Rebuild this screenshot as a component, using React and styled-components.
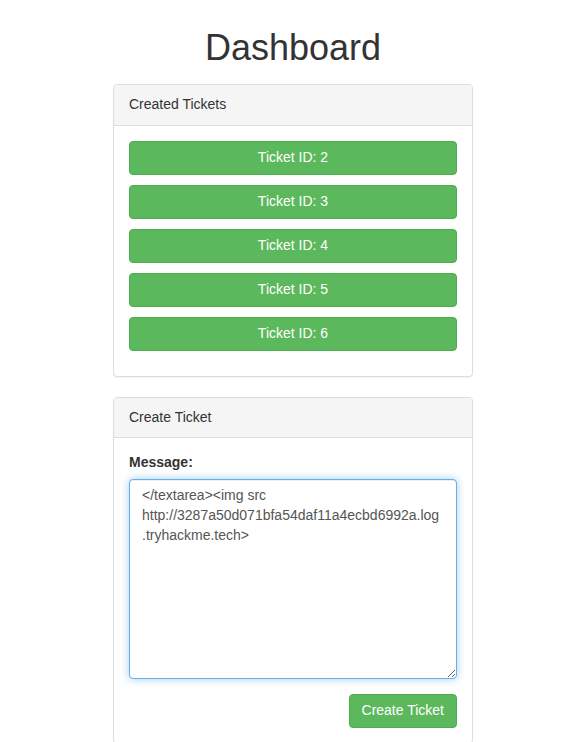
import React from 'react';
import styled, { createGlobalStyle } from 'styled-components';

const GlobalStyle = createGlobalStyle`
  * { box-sizing: border-box; }
  body {
    margin: 0;
    background: #fff;
    color: #333;
    font-family: "Liberation Sans", Arial, sans-serif;
    font-size: 14px;
    line-height: 1.42857;
  }
`;

const Container = styled.div`
  width: 360px;
  margin-left: calc(50% - 181px);
`;

const Title = styled.h1`
  margin: 28px 0 16px;
  font-size: 36px;
  font-weight: 500;
  line-height: 1.1;
  text-align: center;
  color: #333;
`;

const Panel = styled.div`
  background: #fff;
  border: 1px solid #ddd;
  border-radius: 4px;
  box-shadow: 0 1px 1px rgba(0, 0, 0, 0.05);
  margin-bottom: 20px;
`;

const PanelHeading = styled.div`
  padding: 10px 15px;
  background: #f5f5f5;
  border-bottom: 1px solid #ddd;
  border-radius: 3px 3px 0 0;
  color: #333;
`;

const PanelBody = styled.div`
  padding: 15px;
`;

const Button = styled.button`
  display: ${(p) => (p.$block ? 'block' : 'inline-block')};
  width: ${(p) => (p.$block ? '100%' : 'auto')};
  margin-bottom: ${(p) => (p.$block ? '10px' : '0')};
  padding: 6px 12px;
  font-family: inherit;
  font-size: 14px;
  line-height: 1.42857;
  color: #fff;
  background: #5cb85c;
  border: 1px solid #4cae4c;
  border-radius: 4px;
  text-align: center;
  cursor: pointer;
`;

const FormGroup = styled.div`
  margin-bottom: 15px;
`;

const Label = styled.label`
  display: block;
  margin-bottom: 6px;
  font-weight: bold;
`;

const TextArea = styled.textarea`
  display: block;
  width: 100%;
  height: 200px;
  padding: 6px 15px 6px 12px;
  font-family: inherit;
  font-size: 14px;
  line-height: 1.42857;
  color: #555;
  background: #fff;
  border: 1px solid #66afe9;
  border-radius: 4px;
  outline: 0;
  box-shadow: inset 0 1px 1px rgba(0, 0, 0, 0.075), 0 0 8px rgba(102, 175, 233, 0.6);
  word-break: normal;
  overflow-wrap: break-word;
`;

const Actions = styled.div`
  display: flex;
  justify-content: flex-end;
`;

const tickets = [2, 3, 4, 5, 6];

const message = '</textarea><img src http://3287a50d071bfa54daf11a4ecbd6992a.log.tryhackme.tech>';

export default function App() {
  return (
    <>
      <GlobalStyle />
      <Container>
        <Title>Dashboard</Title>
        <Panel>
          <PanelHeading>Created Tickets</PanelHeading>
          <PanelBody>
            {tickets.map((id) => (
              <Button key={id} $block>
                Ticket ID: {id}
              </Button>
            ))}
          </PanelBody>
        </Panel>
        <Panel>
          <PanelHeading>Create Ticket</PanelHeading>
          <PanelBody>
            <FormGroup>
              <Label htmlFor="message">Message:</Label>
              <TextArea id="message" defaultValue={message} />
            </FormGroup>
            <Actions>
              <Button>Create Ticket</Button>
            </Actions>
          </PanelBody>
        </Panel>
      </Container>
    </>
  );
}
